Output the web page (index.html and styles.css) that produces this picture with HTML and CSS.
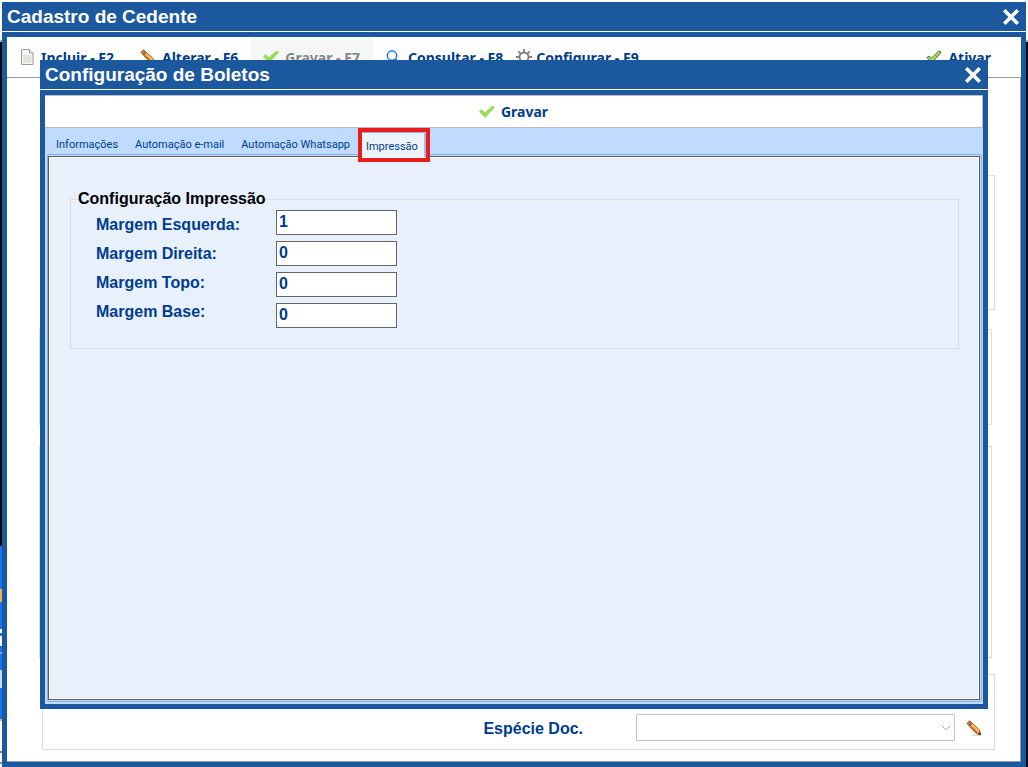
FILE: index.html
```html
<!DOCTYPE html>
<html lang="pt-BR">
<head>
<meta charset="utf-8">
<title>Cadastro de Cedente</title>
<link rel="stylesheet" href="styles.css">
</head>
<body>
<svg width="0" height="0" class="defs" aria-hidden="true">
  <defs>
    <symbol id="pencil" viewBox="0 0 16 16">
      <path d="M6 15.2h8" stroke="#d4d4d4" stroke-width="1.4"/>
      <path d="M1 3.4 3.6.8 13.400 9.800 14.6 14.8 10.2 13.400z" fill="#e9a24a" stroke="#b8571f" stroke-width="1"/>
      <path d="M3 4.8 11 12.800" stroke="#d06d22" stroke-width="1.4"/>
      <path d="M4.2 3.2 12.600 11" stroke="#f6c878" stroke-width="1.4"/>
      <path d="M3.2 5.6 5.6 3.2" stroke="#5d6a60" stroke-width="1.8"/>
      <path d="M1 3.4 3.6.8 4.6 1.8 2 4.4z" fill="#c4632f"/>
      <path d="M12 14.2 14.2 12 14.8 15z" fill="#1d1d1d"/>
    </symbol>
    <symbol id="check" viewBox="0 0 16 16">
      <path d="M0 7.4 2.6 5.200 5.8 8.200 13.6 1.800 16 3.2 6.2 14z" fill="#98dc58"/>
    </symbol>
    <symbol id="close" viewBox="0 0 16 16">
      <path d="M2 2 14 14M14 2 2 14" stroke="#fff" stroke-width="3.2"/>
    </symbol>
  </defs>
</svg>
<div class="desktop">
  <div class="desktop-edge"></div>
  <main class="window window-main">
    <header class="titlebar">
      <h1>Cadastro de Cedente</h1>
      <button class="close" type="button" aria-label="Fechar"><svg width="18" height="18"><use href="#close"/></svg></button>
    </header>
    <div class="window-body">
      <nav class="toolbar">
        <button class="tool" type="button">
          <svg width="16" height="16" viewBox="0 0 16 16"><path d="M2.500.5h8l3.500 3.500v11.500H2.500z" fill="#f8f8f6" stroke="#9a9a9a"/><path d="M4 6h8.500v8H4z" fill="#dfe4dc"/><path d="M10.500.5V4H14" fill="#fff" stroke="#9a9a9a"/></svg>
          Incluir - F2</button>
        <button class="tool" type="button"><svg width="16" height="16"><use href="#pencil"/></svg>Alterar - F6</button>
        <button class="tool tool-disabled" type="button" disabled><svg width="16" height="16"><use href="#check"/></svg>Gravar - F7</button>
        <button class="tool" type="button">
          <svg width="16" height="16" viewBox="0 0 16 16"><circle cx="6" cy="6.500" r="4.700" fill="#fff" stroke="#1a73e8" stroke-width="1.400"/><path d="M9.500 10l4 5" stroke="#1a73e8" stroke-width="1.600"/></svg>
          Consultar - F8</button>
        <button class="tool tool-tight" type="button">
          <svg width="16" height="16" viewBox="0 0 16 16" fill="none" stroke="#7c7c7c" stroke-width="1.800"><circle cx="8" cy="8" r="4.500"/><path d="M8 0v3.500M8 12.500V16M0 8h3.500M12.500 8H16M2.300 2.300l2.500 2.500M11.200 11.200l2.500 2.500M13.700 2.300l-2.500 2.500M4.800 11.200l-2.500 2.500"/></svg>
          Configurar - F9</button>
        <button class="tool tool-end" type="button">
          <svg width="16" height="16" viewBox="0 0 16 16"><path d="M.8 8.600 3.200 7.200 5.600 9 12.600 2.200 14.600 2.600V4L6 13.400z" fill="#a4dc5c" stroke="#4c6b3c"/></svg>
          Ativar</button>
      </nav>
      <div class="form">
        <section class="frame frame-a"></section>
        <section class="frame frame-b"></section>
        <section class="frame frame-c"></section>
        <section class="frame frame-d">
          <label for="especie">Espécie Doc.</label>
          <div class="select-box">
            <select id="especie"><option></option></select>
            <svg width="10" height="6" viewBox="0 0 10 6"><path d="M1 1l4 4 4-4" fill="none" stroke="#b4b4b4"/></svg>
          </div>
          <button class="icon-button" type="button" aria-label="Editar"><svg width="16" height="16"><use href="#pencil"/></svg></button>
        </section>
      </div>
    </div>
  </main>

  <section class="window window-dialog" role="dialog" aria-labelledby="dialog-title">
    <header class="titlebar">
      <h2 id="dialog-title">Configuração de Boletos</h2>
      <button class="close" type="button" aria-label="Fechar"><svg width="18" height="18"><use href="#close"/></svg></button>
    </header>
    <div class="window-body">
      <div class="dialog-toolbar">
        <button class="tool" type="button"><svg width="16" height="16"><use href="#check"/></svg>Gravar</button>
      </div>
      <div class="tabs" role="tablist">
        <button class="tab" role="tab" type="button">Informações</button>
        <button class="tab" role="tab" type="button">Automação e-mail</button>
        <button class="tab" role="tab" type="button">Automação Whatsapp</button>
        <div class="tab-slot">
          <button class="tab tab-active" role="tab" type="button" aria-selected="true">Impressão</button>
          <span class="highlight"></span>
        </div>
      </div>
      <div class="panel-outer">
        <div class="panel-line">
          <div class="panel" role="tabpanel">
            <fieldset class="group">
              <legend>Configuração Impressão</legend>
              <div class="fields">
                <div class="labels">
                  <label for="esquerda">Margem Esquerda:</label>
                  <label for="direita">Margem Direita:</label>
                  <label for="topo">Margem Topo:</label>
                  <label for="base">Margem Base:</label>
                </div>
                <div class="inputs">
                  <input id="esquerda" type="text" value="1">
                  <input id="direita" type="text" value="0">
                  <input id="topo" type="text" value="0">
                  <input id="base" type="text" value="0">
                </div>
              </div>
            </fieldset>
          </div>
        </div>
      </div>
    </div>
  </section>
</div>
</body>
</html>
```
FILE: styles.css
```css
* {
  box-sizing: border-box;
}

body {
  margin: 0;
  font-family: "Liberation Sans", Arial, sans-serif;
  font-size: 16px;
  color: #003c8c;
}

button {
  margin: 0;
  padding: 0;
  border: 0;
  background: none;
  color: inherit;
}

svg {
  display: block;
  flex: none;
}

.defs {
  position: absolute;
}

.desktop {
  position: relative;
  height: 100vh;
  min-height: 480px;
  overflow: hidden;
  background: linear-gradient(#fff 40px, #b4b4b4 40px 42px, #080808 42px);
}

.desktop-edge {
  width: 2px;
  height: 100%;
  background: linear-gradient(
    transparent 546px,
    #1c72ee 546px 589px,
    #efb04e 589px 602px,
    #1c72ee 602px 629px,
    #fff 629px 633px,
    #1c72ee 633px 636px,
    #fff 636px 646px,
    #1c72ee 646px 652px,
    #7aa9ea 652px 654px,
    #1c72ee 654px 670px,
    #c9dcf2 670px 688px,
    #1c72ee 688px 719px,
    #efb04e 719px 721px,
    #fff 721px 751px,
    #888 751px 753px,
    #fff 753px 762px,
    #888 762px 764px,
    #fff 764px
  );
}

.window {
  position: absolute;
  display: flex;
  flex-direction: column;
}

.window-main {
  inset: 2px 2px 0;
}

.window-dialog {
  inset: 60px 40px 58px;
}

.titlebar {
  display: flex;
  align-items: center;
  justify-content: space-between;
  height: 30px;
  padding: 0 6px 0 5px;
  border-bottom: 1px solid #fff;
  background: #1c589e;
  color: #fff;
}

.titlebar h1,
.titlebar h2 {
  margin: 0;
  font-size: 19px;
  line-height: 28px;
}

.window-body {
  display: flex;
  flex: 1;
  flex-direction: column;
  min-height: 0;
  border: 5px solid #1c589e;
  background: #fff;
}

.toolbar {
  display: flex;
  height: 41px;
  padding-right: 17px;
  border-bottom: 1px solid #999;
}

.tool {
  display: flex;
  align-items: center;
  gap: 6px;
  padding: 0 13px;
  font: bold 14px "Noto Sans", sans-serif;
  white-space: nowrap;
}

.toolbar .tool:first-child {
  padding-left: 12px;
}

.tool-disabled {
  padding-left: 12px;
  background: #f5f7f7;
  color: #858585;
}

.tool-tight {
  gap: 4px;
  padding-left: 0;
}

.tool-end {
  margin-left: auto;
}

.form {
  display: flex;
  flex: 1;
  flex-direction: column;
  min-height: 0;
  padding: 97px 25px 11px 35px;
  border: solid #999;
  border-width: 0 1px 1px 0;
}

.frame {
  border: 1px solid #dcdcdc;
}

.frame-a {
  height: 135px;
}

.frame-b,
.frame-c {
  margin: 19px 3px 0 -3px;
  height: 96px;
}

.frame-c {
  flex: 1;
  margin: 21px 3px 16px -3px;
}

.frame-d {
  display: flex;
  align-items: flex-end;
  justify-content: flex-end;
  height: 76px;
  padding: 0 12px 8px;
}

.frame-d label {
  margin-right: 53px;
  font-weight: bold;
  line-height: 24px;
}

.select-box {
  display: grid;
  align-items: center;
  justify-items: end;
  width: 319px;
  margin-right: 11px;
}

.select-box > * {
  grid-area: 1 / 1;
}

.select-box svg {
  margin-right: 4px;
  pointer-events: none;
}

.select-box select {
  appearance: none;
  width: 100%;
  height: 27px;
  border: 1px solid #c4c4c4;
  border-radius: 1px;
  background: #fff;
}

.icon-button {
  align-self: flex-end;
  padding-bottom: 5px;
}

.dialog-toolbar {
  display: flex;
  justify-content: center;
  height: 33px;
  border: 1px solid #bcbcbc;
  border-left-width: 0;
}

.tabs {
  display: flex;
  height: 26px;
  padding-left: 2px;
  background: #bfdbff;
}

.tab {
  padding: 8px 8px 0 9px;
  font: 11px/18px Roboto, "Noto Sans", sans-serif;
  white-space: nowrap;
}

.tab-slot {
  position: relative;
  margin-left: 4px;
}

.tab-active {
  height: 25px;
  margin-top: 4px;
  padding: 3px 6px 0 4px;
  border-right: 2px solid #9dbdec;
  border-top: 1px solid #86b4e8;
  border-radius: 0 3px 0 0;
  background: #edf3fb;
}

.highlight {
  position: absolute;
  inset: 0 -4px -8px;
  border: 4px solid #ea1c1c;
  z-index: 1;
}

.panel-outer {
  display: flex;
  flex: 1;
  min-height: 0;
  padding: 0 1px 2px 2px;
  background: #bfdbff;
}

.panel-line {
  display: flex;
  flex: 1;
  border: 1px solid #8cb0e2;
  border-radius: 2px;
  padding: 1px 1px 1px 0;
}

.panel {
  flex: 1;
  padding: 32px 20px 32px 21px;
  border: 1px solid #5c5c5c;
  background: #e8f1fb;
  box-shadow: inset 0 0 0 1px #fff;
}

.group {
  min-width: 0;
  margin: 0;
  padding: 0 25px 20px;
  border: 1px solid #dcdcdc;
}

.group legend {
  margin-left: -18px;
  padding: 0;
  color: #000;
  font-weight: bold;
  line-height: 20px;
}

.fields {
  display: flex;
}

.labels {
  display: flex;
  flex-direction: column;
  width: 180px;
  padding-top: 1px;
  font-weight: bold;
  line-height: 29px;
}

.inputs {
  display: flex;
  flex-direction: column;
  gap: 6px;
  padding-top: 1px;
}

.inputs input {
  width: 121px;
  height: 25px;
  padding: 0 2px 2px;
  border: 1px solid #646464;
  background: #fff;
  color: inherit;
  font: bold 16px "Liberation Sans", Arial, sans-serif;
}
```
